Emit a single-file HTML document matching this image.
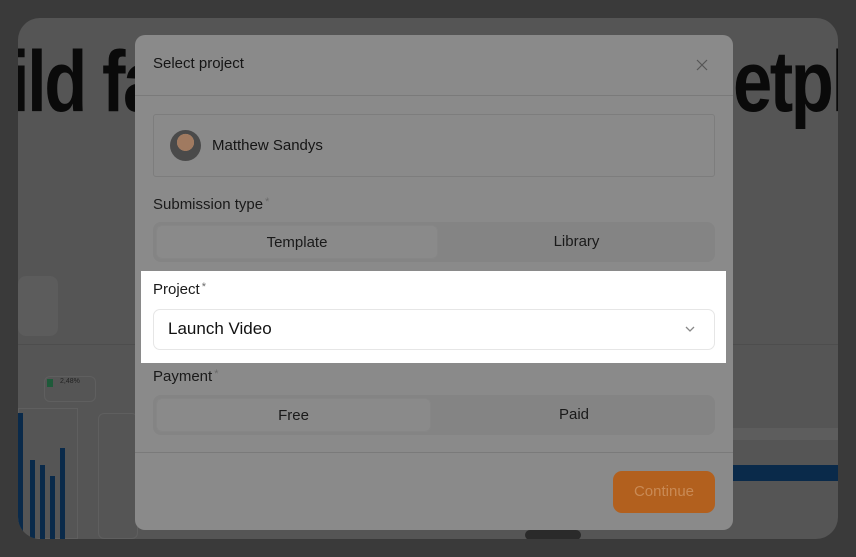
<!DOCTYPE html><html><head><style>
*{margin:0;padding:0;box-sizing:border-box}
body{width:856px;height:557px;background:#3a3a3a;font-family:"Liberation Sans",sans-serif;position:relative;overflow:hidden}
.page{position:absolute;left:18px;top:18px;width:820px;height:521px;background:#555;border-radius:22px;overflow:hidden}
.big{position:absolute;top:14px;font-size:86px;font-weight:bold;color:#0a0a0a;letter-spacing:-3px;line-height:100px;transform:scaleX(0.82);transform-origin:left top;white-space:nowrap}
.modal{position:absolute;left:135px;top:35px;width:598px;height:495px;background:#8a8a8a;border-radius:10px}
.abs{position:absolute}
.lbl{font-size:15px;color:#1a1a1a}
.lbl span{color:#6a6a6a;font-size:11px;vertical-align:top;margin-left:2px}
.seg{position:absolute;left:18px;width:562px;height:40px;background:#848484;border-radius:8px}
.seg div{position:absolute;top:3px;height:34px;font-size:15px;color:#1a1a1a;text-align:center;line-height:34px}
</style></head><body>
<div class="page">
<div class="big" style="left:-8px">ild fa</div>
<div class="big" style="left:715px">etpla</div>
<div class="abs" style="left:0;top:258px;width:40px;height:60px;background:#5c5c5c;border-radius:8px"></div>
<div class="abs" style="left:0;top:326px;width:820px;height:1px;background:#4d4d4d"></div>
<div class="abs" style="left:26px;top:358px;width:52px;height:26px;border:1px solid #5f5f5f;border-radius:6px"></div>
<div class="abs" style="left:29px;top:361px;width:6px;height:8px;background:#1f5a3a"></div>
<div class="abs" style="left:42px;top:360px;font-size:7px;color:#222">2,48%</div>
<div class="abs" style="left:0;top:390px;width:60px;height:131px;border:1px solid #5f5f5f"></div>
<div class="abs" style="left:0;top:395px;width:5px;height:126px;background:#0a2a4a"></div>
<div class="abs" style="left:12px;top:442px;width:5px;height:80px;background:#0a2a4a"></div>
<div class="abs" style="left:22px;top:447px;width:5px;height:75px;background:#0a2a4a"></div>
<div class="abs" style="left:32px;top:458px;width:5px;height:64px;background:#0a2a4a"></div>
<div class="abs" style="left:42px;top:430px;width:5px;height:92px;background:#0a2a4a"></div>
<div class="abs" style="left:80px;top:395px;width:40px;height:126px;border:1px solid #5f5f5f;border-radius:6px"></div>
<div class="abs" style="left:715px;top:447px;width:105px;height:16px;background:#0a2a4a"></div>
<div class="abs" style="left:715px;top:410px;width:105px;height:12px;background:#5d5d5d"></div>
<div class="abs" style="left:507px;top:512px;width:56px;height:10px;background:#2a2a2a;border-radius:5px"></div>
</div>
<div class="modal">
<div class="abs" style="left:18px;top:20px;font-size:15px;color:#151515">Select project</div>
<svg class="abs" style="left:561px;top:24px" width="12" height="12" viewBox="0 0 12 12"><path d="M1 1l10 10M11 1L1 11" stroke="#555" stroke-width="1.2"/></svg>
<div class="abs" style="left:0;top:60px;width:598px;height:1px;background:#7a7a7a"></div>
<div class="abs" style="left:18px;top:79px;width:562px;height:63px;border:1px solid #7d7d7d;border-radius:3px"></div>
<div class="abs" style="left:35px;top:95px;width:31px;height:31px;border-radius:50%;background:radial-gradient(circle at 50% 40%,#a07a60 0 35%,#4a4a4a 36%)"></div>
<div class="abs" style="left:77px;top:102px;font-size:15px;color:#151515">Matthew Sandys</div>
<div class="abs lbl" style="left:18px;top:161px">Submission type<span>*</span></div>
<div class="seg" style="top:187px"><div style="left:3px;width:282px;background:#8a8a8a;border-radius:6px;border:1px solid #868686">Template</div><div style="left:285px;width:277px">Library</div></div>
<div class="abs lbl" style="left:18px;top:333px">Payment<span>*</span></div>
<div class="seg" style="top:360px"><div style="left:3px;width:275px;background:#8a8a8a;border-radius:6px;border:1px solid #868686">Free</div><div style="left:280px;width:282px">Paid</div></div>
<div class="abs" style="left:0;top:417px;width:598px;height:1px;background:#7a7a7a"></div>
<div class="abs" style="left:478px;top:436px;width:102px;height:42px;background:#b2601e;border-radius:9px;color:#c98a55;font-size:15px;text-align:center;line-height:42px">Continue</div>
</div>
<div class="abs" style="left:141px;top:271px;width:585px;height:92px;background:#fff">
<div class="abs lbl" style="left:12px;top:10px">Project<span>*</span></div>
<div class="abs" style="left:12px;top:38px;width:562px;height:41px;border:1px solid #e6e6e6;border-radius:7px"></div>
<div class="abs" style="left:27px;top:48px;font-size:17px;color:#111">Launch Video</div>
<svg class="abs" style="left:543px;top:53px" width="12" height="10" viewBox="0 0 12 10"><path d="M2 3l4 4 4-4" fill="none" stroke="#888" stroke-width="1.3"/></svg>
</div>
</body></html>
